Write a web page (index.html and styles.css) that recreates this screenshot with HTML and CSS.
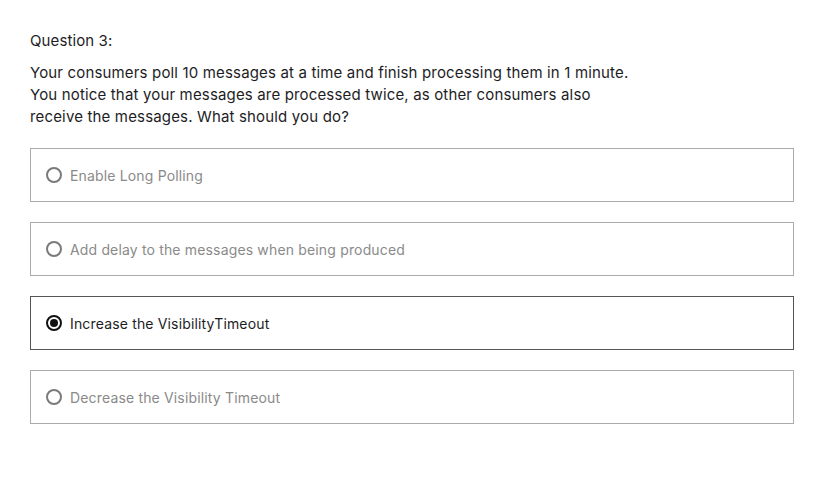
FILE: index.html
```html
<!DOCTYPE html>
<html>
<head>
<meta charset="utf-8">
<link rel="stylesheet" href="styles.css">
</head>
<body>
<div class="quiz">
  <div class="qtitle">Question 3:</div>
  <p class="qtext">Your consumers poll 10 messages at a time and finish processing them in 1 minute.<br>You notice that your messages are processed twice, as other consumers also<br>receive the messages. What should you do?</p>
  <div class="options">
    <label class="option"><span class="radio"></span><span class="label">Enable Long Polling</span></label>
    <label class="option"><span class="radio"></span><span class="label">Add delay to the messages when being produced</span></label>
    <label class="option selected"><span class="radio"></span><span class="label">Increase the VisibilityTimeout</span></label>
    <label class="option"><span class="radio"></span><span class="label">Decrease the Visibility Timeout</span></label>
  </div>
</div>
</body>
</html>
```
FILE: styles.css
```css
html, body {
  margin: 0;
  padding: 0;
  background: #fff;
}
body {
  font-family: Inter, "Noto Sans", sans-serif;
  color: #1d1d1f;
}
.quiz {
  width: 764px;
  padding: 30px 0 0 30px;
}
.qtitle {
  font-size: 15px;
  line-height: 22px;
  margin-bottom: 10px;
  letter-spacing: 0.1px;
}
.qtext {
  margin: 0 0 20px 0;
  font-size: 15px;
  line-height: 22px;
  letter-spacing: 0.16px;
}
.options {
  display: flex;
  flex-direction: column;
  gap: 20px;
}
.option {
  display: flex;
  align-items: center;
  height: 52px;
  border: 1px solid #ababab;
  padding-left: 15px;
  gap: 8px;
  color: #8a8a8a;
  font-size: 14px;
  letter-spacing: 0.16px;
}
.option.selected {
  border-color: #555;
  color: #1d1d1f;
}
.radio {
  box-sizing: border-box;
  width: 16px;
  height: 16px;
  border: 2px solid #7a7a7a;
  border-radius: 50%;
  display: flex;
  align-items: center;
  justify-content: center;
}
.option.selected .radio {
  border-color: #111;
}
.option.selected .radio::after {
  content: "";
  width: 8px;
  height: 8px;
  border-radius: 50%;
  background: #111;
}
```
